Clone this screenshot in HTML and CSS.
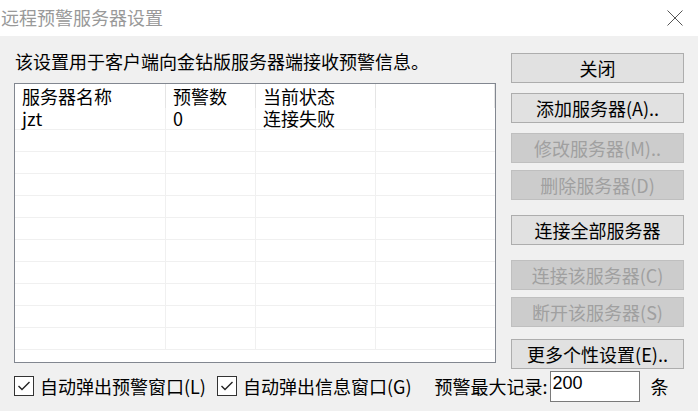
FILE: index.html
```html
<!DOCTYPE html>
<html lang="zh-CN">
<head>
    <meta charset="UTF-8">
    <title>远程预警服务器设置</title>
    <link rel="stylesheet" href="styles.css">
</head>
<body>
    <div class="window">
        <div class="titlebar">
            <span class="title">远程预警服务器设置</span>
            <svg class="close" width="16" height="16" viewBox="0 0 16 16">
                <path d="M0.5 0.5 L15.5 15.5 M15.5 0.5 L0.5 15.5" stroke="#555" stroke-width="1" fill="none"/>
            </svg>
        </div>

        <div class="content">
            <div class="main">
                <div class="left">
                    <p class="desc">该设置用于客户端向金钻版服务器端接收预警信息。</p>

                    <!-- server list -->
                    <div class="list">
                        <div class="row header">
                            <div class="cell c1">服务器名称</div>
                            <div class="cell c2">预警数</div>
                            <div class="cell c3">当前状态</div>
                            <div class="cell c4"></div>
                        </div>
                        <div class="row">
                            <div class="cell c1">jzt</div>
                            <div class="cell c2">0</div>
                            <div class="cell c3">连接失败</div>
                            <div class="cell c4"></div>
                        </div>
                        <div class="row"><div class="cell c1"></div><div class="cell c2"></div><div class="cell c3"></div><div class="cell c4"></div></div>
                        <div class="row"><div class="cell c1"></div><div class="cell c2"></div><div class="cell c3"></div><div class="cell c4"></div></div>
                        <div class="row"><div class="cell c1"></div><div class="cell c2"></div><div class="cell c3"></div><div class="cell c4"></div></div>
                        <div class="row"><div class="cell c1"></div><div class="cell c2"></div><div class="cell c3"></div><div class="cell c4"></div></div>
                        <div class="row"><div class="cell c1"></div><div class="cell c2"></div><div class="cell c3"></div><div class="cell c4"></div></div>
                        <div class="row"><div class="cell c1"></div><div class="cell c2"></div><div class="cell c3"></div><div class="cell c4"></div></div>
                        <div class="row"><div class="cell c1"></div><div class="cell c2"></div><div class="cell c3"></div><div class="cell c4"></div></div>
                        <div class="row"><div class="cell c1"></div><div class="cell c2"></div><div class="cell c3"></div><div class="cell c4"></div></div>
                        <div class="row"><div class="cell c1"></div><div class="cell c2"></div><div class="cell c3"></div><div class="cell c4"></div></div>
                        <div class="row"><div class="cell c1"></div><div class="cell c2"></div><div class="cell c3"></div><div class="cell c4"></div></div>
                    </div>
                </div>

                <div class="buttons">
                    <button class="btn">关闭</button>
                    <button class="btn gap-m">添加服务器(A)..</button>
                    <button class="btn gap-m" disabled>修改服务器(M)..</button>
                    <button class="btn gap-s" disabled>删除服务器(D)</button>
                    <button class="btn gap-l">连接全部服务器</button>
                    <button class="btn gap-l" disabled>连接该服务器(C)</button>
                    <button class="btn gap-s" disabled>断开该服务器(S)</button>
                    <button class="btn gap-b">更多个性设置(E)..</button>
                </div>
            </div>

            <div class="footer">
                <label class="check">
                    <span class="box">
                        <svg width="18" height="18" viewBox="0 0 18 18">
                            <polyline points="3.5,9 7,12.5 14.5,5" stroke="#222" stroke-width="1.4" fill="none"/>
                        </svg>
                    </span>
                    自动弹出预警窗口(L)
                </label>
                <label class="check second">
                    <span class="box">
                        <svg width="18" height="18" viewBox="0 0 18 18">
                            <polyline points="3.5,9 7,12.5 14.5,5" stroke="#222" stroke-width="1.4" fill="none"/>
                        </svg>
                    </span>
                    自动弹出信息窗口(G)
                </label>
                <span class="max-label">预警最大记录:</span>
                <input class="max-input" type="text" value="200">
                <span class="unit">条</span>
            </div>
        </div>
    </div>
</body>
</html>
```

FILE: styles.css
```css
body {
    margin: 0;
    padding: 0;
    font-family: "Noto Sans CJK SC", "Noto Sans", sans-serif;
    font-size: 18px;
    color: #000;
    background-color: #f0f0f0;
}
.window {
    width: 698px;
    height: 411px;
    overflow: hidden;
    background-color: #f0f0f0;
}
.titlebar {
    height: 36px;
    display: flex;
    align-items: center;
    justify-content: space-between;
    background: #fff;
    padding: 0 15px 0 1px;
}
.title {
    font-size: 18px;
    color: #999;
    line-height: 36px;
    margin-top: -2px;
}
.content {
    padding: 0 0 0 14px;
}
.main {
    display: flex;
}
.left {
    width: 482px;
    padding-top: 13px;
}
.desc {
    margin: 0 0 10px 1px;
    line-height: 24px;
}
.list {
    height: 278px;
    border: 1px solid #828790;
    background: #fff;
    overflow: hidden;
}
.row {
    display: flex;
    height: 22px;
}
.row .cell {
    height: 21px;
    line-height: 21px;
    border-bottom: 1px solid #f0f0f0;
    border-right: 1px solid #f0f0f0;
    padding-left: 7px;
    white-space: nowrap;
}
.row.header {
    height: 24px;
}
.row.header .cell {
    height: 24px;
    line-height: 24px;
    border-bottom: none;
    border-right: 1px solid #e5e5e5;
}
.c1 { width: 143px; }
.c2 { width: 82px; }
.c3 { width: 112px; }
.c4 { flex: 1; }
.row .c4 { border-right: none; }
.buttons {
    display: flex;
    flex-direction: column;
    margin-left: 15px;
    padding-top: 17px;
}
.btn {
    width: 173px;
    height: 30px;
    padding: 0;
    font-family: inherit;
    font-size: 18px;
    color: #000;
    background-color: #e1e1e1;
    border: 1px solid #adadad;
    border-radius: 0;
}
.btn:disabled {
    color: #a0a0a0;
    background-color: #cccccc;
    border-color: #bfbfbf;
}
.gap-s { margin-top: 7px; }
.gap-m { margin-top: 10px; }
.gap-l { margin-top: 15px; }
.gap-b { margin-top: 12px; }
.footer {
    display: flex;
    align-items: center;
    height: 33px;
}
.check {
    display: flex;
    align-items: center;
    margin-right: 11px;
    line-height: 24px;
}
.check.second {
    margin-right: 23px;
}
.box {
    width: 18px;
    height: 18px;
    border: 1px solid #333;
    background: #fff;
    margin-right: 6px;
    display: flex;
}
.max-input {
    box-sizing: border-box;
    width: 90px;
    height: 31px;
    padding: 0 2px;
    margin: 0 0 0 2px;
    border: 1px solid #7a7a7a;
    font-family: "Liberation Sans", sans-serif;
    font-size: 18px;
    background: #fff;
    align-self: flex-end;
    padding-bottom: 6px;
}
.unit {
    margin-left: 11px;
}
```
